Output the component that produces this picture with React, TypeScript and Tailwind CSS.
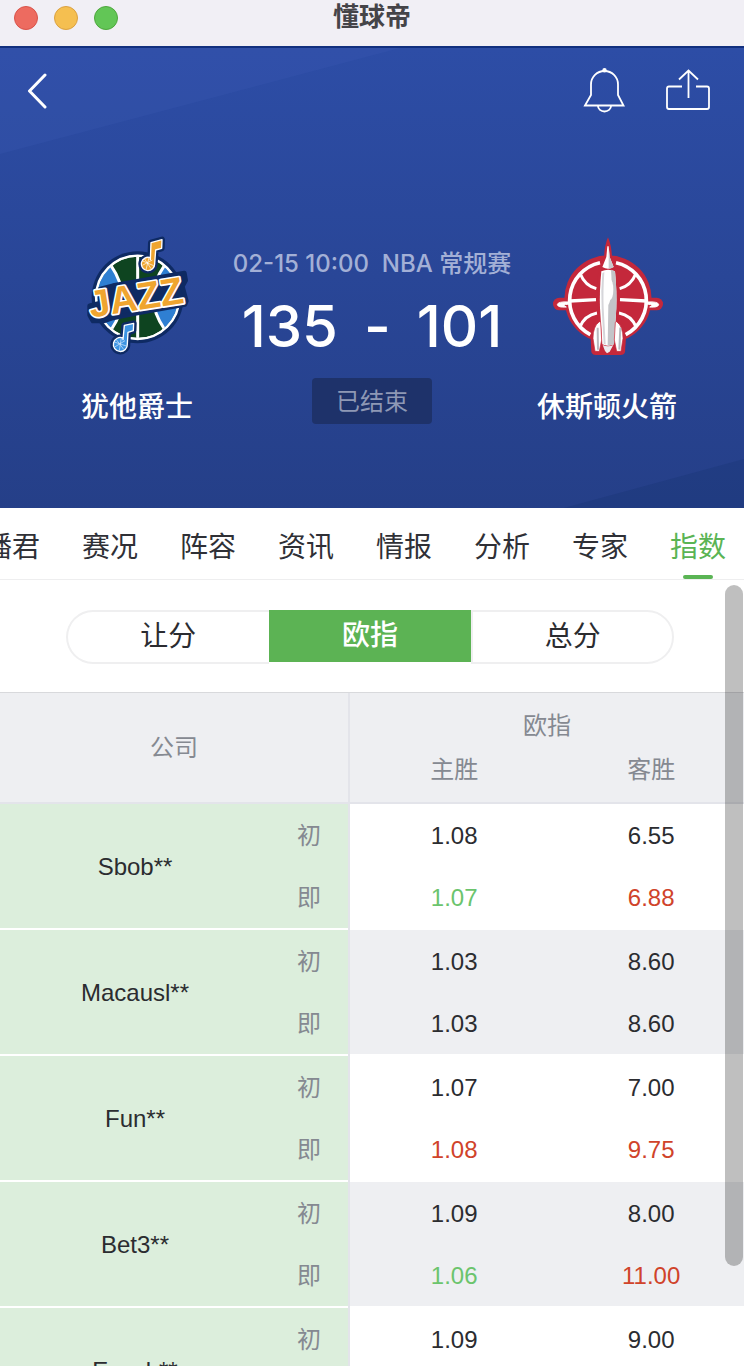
import React from "react";

type Tone = "flat" | "up" | "down";
type Quote = { home: string; away: string; homeTone?: Tone; awayTone?: Tone };
type Company = { name: string; opening: Quote; live: Quote };

const tabs = ["主播君", "赛况", "阵容", "资讯", "情报", "分析", "专家", "指数"];

const companies: Company[] = [
  {
    name: "Sbob**",
    opening: { home: "1.08", away: "6.55" },
    live: { home: "1.07", away: "6.88", homeTone: "down", awayTone: "up" },
  },
  {
    name: "Macausl**",
    opening: { home: "1.03", away: "8.60" },
    live: { home: "1.03", away: "8.60" },
  },
  {
    name: "Fun**",
    opening: { home: "1.07", away: "7.00" },
    live: { home: "1.08", away: "9.75", homeTone: "up", awayTone: "up" },
  },
  {
    name: "Bet3**",
    opening: { home: "1.09", away: "8.00" },
    live: { home: "1.06", away: "11.00", homeTone: "down", awayTone: "up" },
  },
  {
    name: "Easyb**",
    opening: { home: "1.09", away: "9.00" },
    live: { home: "1.09", away: "9.00" },
  },
];

const toneClass: Record<Tone, string> = {
  flat: "text-[#2b2c30]",
  up: "text-[#d0432a]",
  down: "text-[#6bc46d]",
};

function JazzLogo() {
  return (
    <svg viewBox="-6 33 360 360" className="size-[120px]" role="img" aria-label="犹他爵士">
      <defs>
        <clipPath id="jazz-ball">
          <circle cx="176" cy="217" r="122" />
        </clipPath>
      </defs>
      <circle cx="176" cy="217" r="138" fill="#0e2a63" />
      <circle cx="176" cy="217" r="127" fill="#fff" />
      <g clipPath="url(#jazz-ball)">
        <rect x="50" y="90" width="252" height="256" fill="#0e4420" />
        <path d="M40 85 L96 122 Q162 217 98 312 L40 350Z" fill="#2f7fd2" stroke="#fff" strokeWidth="9" />
        <path d="M312 85 L256 122 Q190 217 256 312 L312 350Z" fill="#2f7fd2" stroke="#fff" strokeWidth="9" />
        <path d="M176 90V345" stroke="#fff" strokeWidth="9" />
      </g>
      <circle cx="176" cy="217" r="125" fill="none" stroke="#fff" strokeWidth="7" />
      <path
        d="M32 242 L64 234 L64 192 L102 182 L316 144 L320 166 L310 184 L322 228 L318 238 L176 264 L98 280 L74 288 L42 288 L32 270Z"
        fill="#0e2a63"
        stroke="#0e2a63"
        strokeWidth="14"
        strokeLinejoin="round"
      />
      <text
        x="36"
        y="278"
        transform="rotate(-9 36 278)"
        fontSize="114"
        fontWeight="700"
        fill="#efa52f"
        stroke="#fff"
        strokeWidth="10"
        strokeLinejoin="round"
        paintOrder="stroke"
        className="font-['Liberation_Sans',sans-serif]"
      >
        JAZZ
      </text>
      <g strokeLinejoin="round">
        <path
          d="M214 104 L216 53 L249 44 L248 70 L230 75 L227 116 A20 20 0 1 1 214 98Z"
          fill="#0e2a63"
          stroke="#0e2a63"
          strokeWidth="18"
        />
        <path
          d="M214 104 L216 53 L249 44 L248 70 L230 75 L227 116 A20 20 0 1 1 214 98Z"
          fill="#efa52f"
          stroke="#fff"
          strokeWidth="4"
        />
        <path d="M191 108 L224 122 M210 98 L201 134 M190 121 L220 105 M197 102 L216 131" stroke="#fff" strokeWidth="2" />
        <path
          d="M132 344 L136 301 L164 295 L163 317 L147 322 L145 357 A21 21 0 1 1 132 339Z"
          fill="#0e2a63"
          stroke="#0e2a63"
          strokeWidth="18"
        />
        <path
          d="M132 344 L136 301 L164 295 L163 317 L147 322 L145 357 A21 21 0 1 1 132 339Z"
          fill="#3c94e2"
          stroke="#fff"
          strokeWidth="4"
        />
        <path d="M106 351 L142 363 M127 338 L121 377 M107 366 L138 347 M112 344 L134 373" stroke="#d9ecff" strokeWidth="2" />
      </g>
    </svg>
  );
}

function RocketsLogo() {
  return (
    <svg viewBox="6 33 360 360" className="size-[120px]" role="img" aria-label="休斯顿火箭">
      <g fill="#c4283b">
        <circle cx="189" cy="222" r="131" />
        <rect x="24" y="218" width="330" height="38" rx="19" />
        <path d="M189 37 Q178 62 177 100 L160 130 H218 L201 100 Q200 62 189 37Z" />
        <path d="M150 285 L136 322 L139 381 Q142 390 152 390 H226 Q238 390 240 381 L244 322 L228 285Z" />
      </g>
      <g fill="none" stroke="#fff" strokeWidth="11">
        <path d="M165 113 A116 116 0 0 0 136 329" />
        <path d="M213 113 A116 116 0 0 1 242 329" />
        <path d="M106 147 Q120 182 154 191 M272 147 Q258 182 224 191" strokeWidth="9" />
        <path d="M104 307 Q119 271 156 264 M274 307 Q259 271 222 264" strokeWidth="9" />
        <path d="M74 228 L153 224 M225 224 L304 228" strokeWidth="10" />
      </g>
      <path
        d="M72 231 Q38 229 37 239 Q39 248 64 246 Q46 240 72 237Z M306 231 Q340 229 341 239 Q339 248 314 246 Q332 240 306 237Z"
        fill="#fff"
        stroke="#fff"
        strokeWidth="3"
      />
      <path d="M164 132 L160 200 L164 362 H214 L218 200 L214 132Z" fill="#c4283b" stroke="#c4283b" strokeWidth="8" />
      <path d="M187 64 H191 L194 96 L206 126 Q189 136 172 126 L184 96Z" fill="#fff" />
      <path d="M191 64 L194 96 L206 126 Q199 131 191 131Z" fill="#c9c9cc" />
      <path d="M169 139 Q189 129 210 139 Q216 200 214 250 L207 358 Q189 366 172 358 L165 250 Q163 200 169 139Z" fill="#fff" />
      <path d="M198 134 L210 139 Q216 200 214 250 L207 358 L188 362 L190 240 Q204 215 198 134Z" fill="#c3c4c8" />
      <path d="M172 145 Q167 200 170 250 L176 356 L182 359 L176 250 Q174 200 178 141Z" fill="#d6d6da" />
      <ellipse cx="195" cy="194" rx="10" ry="31" fill="#fff" />
      <path d="M163 290 Q144 304 144 340 L150 379 H163 L170 345 L167 292Z" fill="#fff" stroke="#c4283b" strokeWidth="2" />
      <path d="M215 290 Q234 304 234 340 L228 379 H215 L208 345 L211 292Z" fill="#fff" stroke="#c4283b" strokeWidth="2" />
      <path d="M158 308 L159 374 M226 308 L223 374" stroke="#b9babf" strokeWidth="6" />
      <path d="M173 360 L180 378 L186 385 L194 380 L205 360 Q189 368 173 360Z" fill="#ececef" />
    </svg>
  );
}

function Team({ name, logo }: { name: string; logo: React.ReactNode }) {
  return (
    <div className="flex w-[180px] flex-col items-center">
      {logo}
      <p className="mt-8 text-[28px] leading-10 font-medium whitespace-nowrap text-white">{name}</p>
    </div>
  );
}

function OddsRow({ label, quote, striped, last, company }: { label: string; quote: Quote; striped: boolean; last: boolean; company?: string }) {
  const edge = last ? "border-b-2 border-b-white" : "";
  const bg = striped ? "bg-[#eeeff2]" : "bg-white";
  return (
    <tr className="h-[63px]">
      {company && (
        <th scope="rowgroup" rowSpan={2} className="border-b-2 border-white bg-[#dceedc] p-0 pt-px font-normal text-[#2b2c30]">
          {company}
        </th>
      )}
      <th scope="row" className={`bg-[#dceedc] p-0 font-normal text-[#858991] ${edge}`}>
        {label}
      </th>
      <td className="bg-[#e3e4ea] p-0" />
      <td className={`p-0 pt-px ${bg} ${edge} ${toneClass[quote.homeTone ?? "flat"]}`}>{quote.home}</td>
      <td className={`p-0 pt-px ${bg} ${edge} ${toneClass[quote.awayTone ?? "flat"]}`}>{quote.away}</td>
    </tr>
  );
}

export default function App() {
  return (
    <div className="flex h-screen flex-col overflow-hidden bg-white font-['Liberation_Sans','Noto_Sans_CJK_SC',sans-serif]">
      <div className="relative flex h-[46px] shrink-0 items-start bg-[#f1eff5] px-[14px] pt-[6px]">
        <div className="flex gap-4">
          <button aria-label="关闭" className="size-6 rounded-full border border-[#d9534a] bg-[#ed6b60]" />
          <button aria-label="最小化" className="size-6 rounded-full border border-[#dba141] bg-[#f5bf50]" />
          <button aria-label="全屏" className="size-6 rounded-full border border-[#4ea73d] bg-[#62c656]" />
        </div>
        <h1 className="pointer-events-none absolute inset-x-0 top-0 text-center text-[26px] leading-[34px] font-bold text-[#454448]">懂球帝</h1>
      </div>

      <header className="relative h-[462px] shrink-0 border-t-2 border-[#12307f] bg-linear-to-b from-[#2d4da6] to-[#253f88]">
        <svg aria-hidden="true" viewBox="0 0 744 460" preserveAspectRatio="none" className="absolute inset-0 size-full">
          <path d="M0 0H400L0 106Z" fill="#4060b8" fillOpacity="0.2" />
          <path d="M744 411V460H564Z" fill="#142e6c" fillOpacity="0.25" />
        </svg>
        <div className="relative">
          <nav className="flex h-[86px] items-center justify-between pr-[33px] pl-[27px]">
            <button aria-label="返回">
              <svg viewBox="0 0 20 36" className="h-9 w-5" fill="none" stroke="#fff" strokeWidth="3" strokeLinecap="round" strokeLinejoin="round">
                <path d="M18 2L2.500 18L18 34" />
              </svg>
            </button>
            <div className="flex items-center gap-10">
              <button aria-label="提醒">
                <svg viewBox="0 0 42 46" className="h-[46px] w-[42px]" fill="none" stroke="#fff" strokeWidth="1.800">
                  <path d="M2 37.500L8 27V16.500A13.500 13.500 0 0 1 35 16.500V27L40.500 37.500Z" />
                  <path d="M15 38A6.500 5.500 0 0 0 28 38" />
                  <circle cx="21.500" cy="2.300" r="2.200" fill="#fff" stroke="none" />
                </svg>
              </button>
              <button aria-label="分享">
                <svg viewBox="0 0 46 46" className="h-[46px] w-[46px]" fill="none" stroke="#fff" strokeWidth="1.800">
                  <path d="M17 18.500H4Q2 18.500 2 20.500V39Q2 41 4 41H42Q44 41 44 39V20.500Q44 18.500 42 18.500H31" />
                  <path d="M23.500 30V2.500M14 11.500L23.500 2.500L33 11.500" />
                </svg>
              </button>
            </div>
          </nav>

          <section className="mt-[102px] flex justify-between px-[47px]">
            <Team name="犹他爵士" logo={<JazzLogo />} />
            <div className="flex flex-col items-center pt-[10px] font-['Inter','Noto_Sans_CJK_SC',sans-serif] whitespace-nowrap">
              <p className="text-2xl leading-9 font-medium whitespace-pre text-[#a3b0d6]">02-15 10:00  NBA 常规赛</p>
              <p className="mt-2 flex h-[72px] items-center gap-[26px] text-[58px] leading-[72px] font-medium text-white">
                <span>135</span>
                <span>-</span>
                <span>101</span>
              </p>
              <p className="mt-4 h-[46px] w-[120px] rounded bg-[#1e326a] text-center text-2xl leading-[48px] text-[#8e98b5]">已结束</p>
            </div>
            <Team name="休斯顿火箭" logo={<RocketsLogo />} />
          </section>
        </div>
      </header>

      <nav className="flex h-[72px] shrink-0 justify-end gap-[42px] overflow-hidden border-b border-[#eeeeef] pr-[18px]">
        {tabs.map((tab) => {
          const active = tab === "指数";
          return (
            <a
              key={tab}
              href="#"
              aria-current={active ? "page" : undefined}
              className={`relative shrink-0 pt-5 text-[28px] leading-10 ${active ? "text-[#5ab454]" : "text-[#2f3036]"}`}
            >
              {tab}
              {active && <span className="absolute bottom-0 left-1/2 h-1 w-[30px] -translate-x-1/2 rounded-sm bg-[#5ab454]" />}
            </a>
          );
        })}
      </nav>

      <main className="relative min-h-0 flex-1">
        <div className="h-full overflow-x-hidden overflow-y-auto [scrollbar-width:none]">
          <div className="grid h-[112px] grid-cols-3 items-start pt-[30px] pr-[70px] pl-[66px] text-[28px] leading-[50px] text-[#2b2c30]">
            <button className="h-[54px] rounded-l-full border-2 border-r-0 border-[#efeff0]">让分</button>
            <button className="h-[52px] bg-[#5cb354] font-medium text-white">欧指</button>
            <button className="h-[54px] rounded-r-full border-2 border-[#efeff0]">总分</button>
          </div>

          <table className="w-full table-fixed border-separate border-spacing-0 border-t border-[#d8d9dc] text-center text-2xl">
            <colgroup>
              <col className="w-[270px]" />
              <col className="w-[78px]" />
              <col className="w-[2px]" />
              <col className="w-[28%]" />
              <col />
            </colgroup>
            <thead className="bg-[#eeeff2] text-[#858991]">
              <tr className="h-[57px]">
                <th scope="col" rowSpan={2} colSpan={2} className="border-b-2 border-[#e3e4ea] p-0 pt-px font-normal">公司</th>
                <td rowSpan={2} className="bg-[#e3e4ea] p-0" />
                <th scope="colgroup" colSpan={2} className="p-0 pt-2 font-normal">欧指</th>
              </tr>
              <tr className="h-[54px]">
                <th scope="col" className="border-b-2 border-[#e3e4ea] p-0 pb-3 font-normal">主胜</th>
                <th scope="col" className="border-b-2 border-[#e3e4ea] p-0 pb-3 font-normal">客胜</th>
              </tr>
            </thead>
            {companies.map((c, i) => (
              <tbody key={c.name}>
                <OddsRow label="初" quote={c.opening} striped={i % 2 === 1} last={false} company={c.name} />
                <OddsRow label="即" quote={c.live} striped={i % 2 === 1} last={true} />
              </tbody>
            ))}
          </table>
        </div>
        <div aria-hidden="true" className="absolute top-[5px] right-px bottom-[100px] w-[18px] rounded-full bg-black/25" />
      </main>
    </div>
  );
}
